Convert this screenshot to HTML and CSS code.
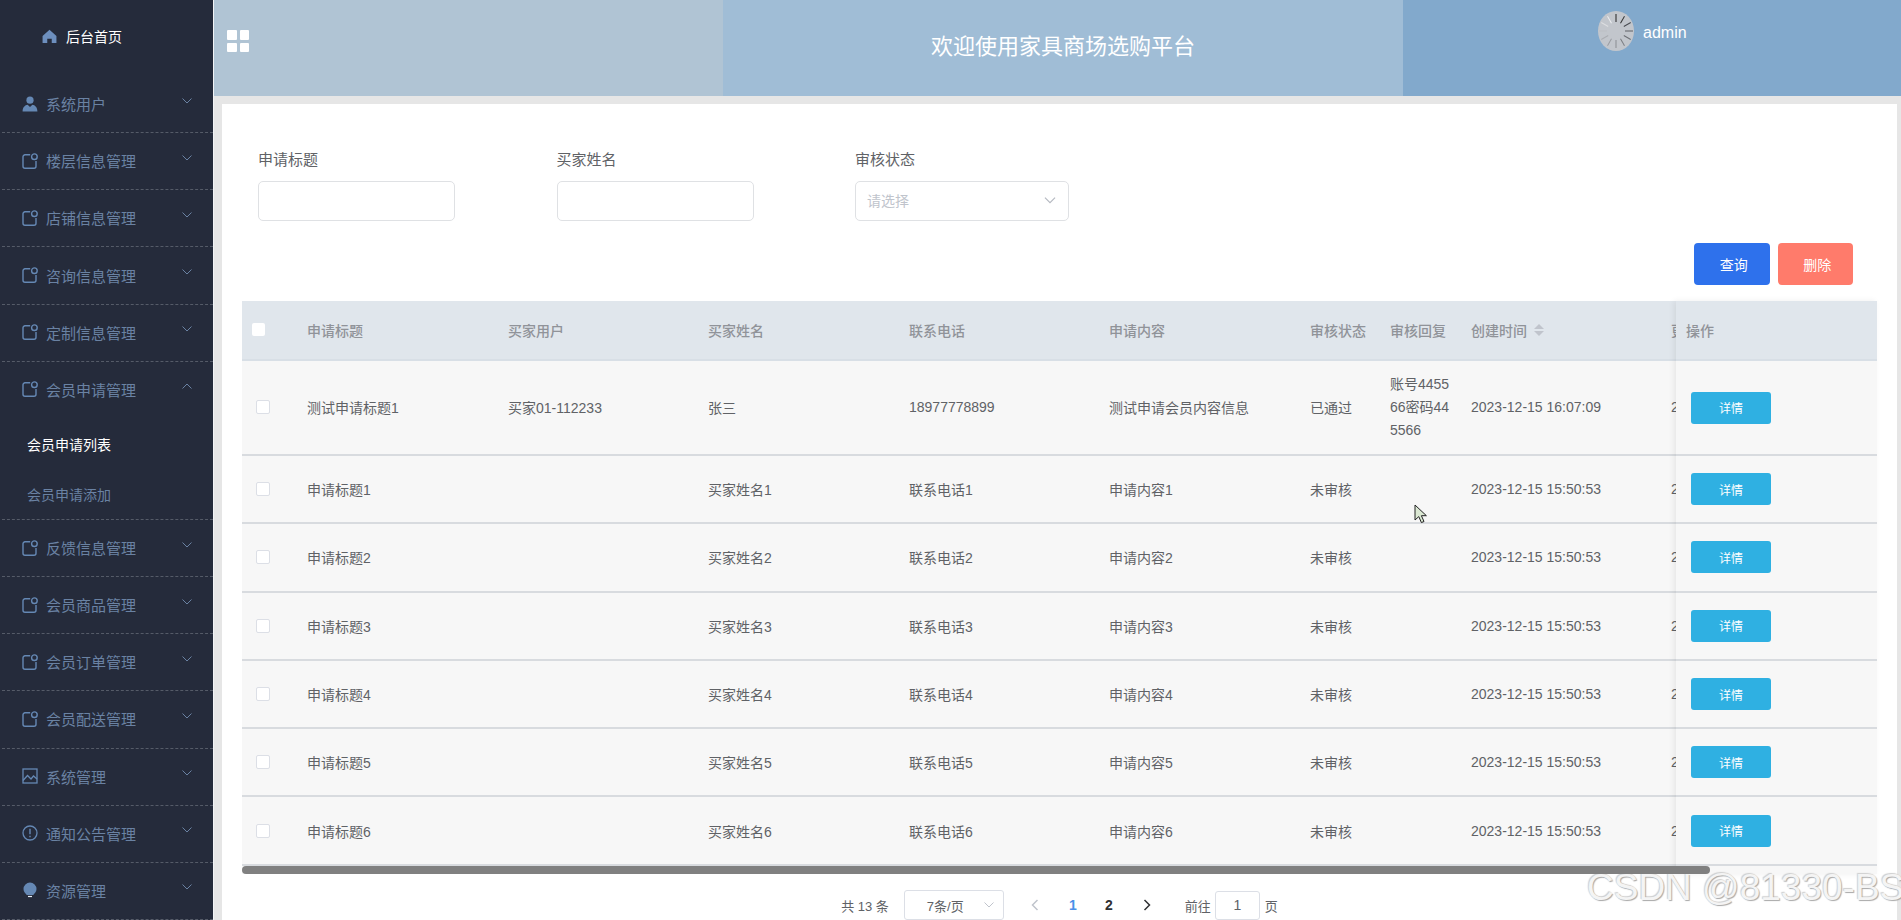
FILE: index.html
```html
<!DOCTYPE html>
<html lang="zh-CN">
<head>
<meta charset="utf-8">
<title>家具商场选购平台</title>
<link rel="stylesheet" href="styles.css">
</head>
<body>
<svg class="defs" width="0" height="0" aria-hidden="true">
  <defs>
    <symbol id="i-cube" viewBox="0 0 16 16"><path d="M8.200 1.800H3a2 2 0 0 0-2 2v9.400a2 2 0 0 0 2 2h9a2 2 0 0 0 2-2V8" fill="none" stroke="currentColor" stroke-width="1.400"/><circle cx="12.400" cy="3.700" r="2.800" fill="none" stroke="currentColor" stroke-width="1.400"/></symbol>
    <symbol id="i-down" viewBox="0 0 12 8"><path d="M1.500 1.500 6 6l4.500-4.500" fill="none" stroke="currentColor" stroke-width="1"/></symbol>
    <symbol id="i-up" viewBox="0 0 12 8"><path d="M1.500 6.500 6 2l4.500 4.500" fill="none" stroke="currentColor" stroke-width="1"/></symbol>
  </defs>
</svg>
<div class="app">
  <aside class="sidebar">
    <div class="home">
      <svg class="home-icon" viewBox="0 0 16 16"><path d="M8 .8 .6 7.400V15h5v-4.600h4.800V15h5V7.400z" fill="currentColor"/></svg>
      <span>后台首页</span>
    </div>
    <nav class="menu">
      <div class="item"><svg class="ico" viewBox="0 0 16 16"><circle cx="8" cy="4.200" r="3.600" fill="currentColor"/><path d="M0.600 15.600c0-4.400 2.400-6.600 5-6.900L8 11l2.400-2.300c2.600.3 5 2.500 5 6.900z" fill="currentColor"/></svg><span>系统用户</span><svg class="chev"><use href="#i-down"/></svg></div>
      <div class="item"><svg class="ico"><use href="#i-cube"/></svg><span>楼层信息管理</span><svg class="chev"><use href="#i-down"/></svg></div>
      <div class="item"><svg class="ico"><use href="#i-cube"/></svg><span>店铺信息管理</span><svg class="chev"><use href="#i-down"/></svg></div>
      <div class="item"><svg class="ico"><use href="#i-cube"/></svg><span>咨询信息管理</span><svg class="chev"><use href="#i-down"/></svg></div>
      <div class="item"><svg class="ico"><use href="#i-cube"/></svg><span>定制信息管理</span><svg class="chev"><use href="#i-down"/></svg></div>
      <div class="item open"><svg class="ico"><use href="#i-cube"/></svg><span>会员申请管理</span><svg class="chev"><use href="#i-up"/></svg></div>
      <div class="sub">
        <div class="sub-item active">会员申请列表</div>
        <div class="sub-item">会员申请添加</div>
      </div>
      <div class="item"><svg class="ico"><use href="#i-cube"/></svg><span>反馈信息管理</span><svg class="chev"><use href="#i-down"/></svg></div>
      <div class="item"><svg class="ico"><use href="#i-cube"/></svg><span>会员商品管理</span><svg class="chev"><use href="#i-down"/></svg></div>
      <div class="item"><svg class="ico"><use href="#i-cube"/></svg><span>会员订单管理</span><svg class="chev"><use href="#i-down"/></svg></div>
      <div class="item"><svg class="ico"><use href="#i-cube"/></svg><span>会员配送管理</span><svg class="chev"><use href="#i-down"/></svg></div>
      <div class="item"><svg class="ico" viewBox="0 0 16 16"><rect x="1" y="1" width="14" height="14" fill="none" stroke="currentColor" stroke-width="1.300"/><path d="M1 12.500 5.500 7.500l3.500 3.500 2.500-3 3.500 3" fill="none" stroke="currentColor" stroke-width="1.300"/></svg><span>系统管理</span><svg class="chev"><use href="#i-down"/></svg></div>
      <div class="item"><svg class="ico" viewBox="0 0 16 16"><circle cx="8" cy="8" r="7" fill="none" stroke="currentColor" stroke-width="1.300"/><path d="M8 3.800v5.400M8 10.800v1.500" fill="none" stroke="currentColor" stroke-width="1.400"/></svg><span>通知公告管理</span><svg class="chev"><use href="#i-down"/></svg></div>
      <div class="item"><svg class="ico" viewBox="0 0 16 16"><path d="M8 .5a6.500 6.500 0 0 1 6.500 6.500c0 2.800-2 4.400-3.300 6H4.800C3.500 11.400 1.500 9.800 1.500 7A6.500 6.500 0 0 1 8 .5z" fill="currentColor"/><path d="M6 14.500h4" stroke="#e6edf5" stroke-width="1.200"/></svg><span>资源管理</span><svg class="chev"><use href="#i-down"/></svg></div>
    </nav>
  </aside>

  <div class="main">
    <header class="topbar">
      <div class="top-left">
        <span class="tile-grid"><i></i><i></i><i></i><i></i></span>
      </div>
      <div class="top-center">欢迎使用家具商场选购平台</div>
      <div class="top-right">
        <svg class="avatar" viewBox="0 0 36 40">
          <ellipse cx="18" cy="20" rx="18" ry="20" fill="#c2c6cc"/>
          <g stroke-width="1">
            <line x1="18" y1="3" x2="18" y2="11" stroke="#222"/>
            <line x1="18" y1="3" x2="18" y2="11" stroke="#333" transform="rotate(30 18 20)"/>
            <line x1="18" y1="3" x2="18" y2="11" stroke="#484b50" transform="rotate(60 18 20)"/>
            <line x1="18" y1="3" x2="18" y2="11" stroke="#5e6166" transform="rotate(90 18 20)"/>
            <line x1="18" y1="3" x2="18" y2="11" stroke="#6c6f74" transform="rotate(120 18 20)"/>
            <line x1="18" y1="3" x2="18" y2="11" stroke="#7a7d82" transform="rotate(150 18 20)"/>
            <line x1="18" y1="3" x2="18" y2="11" stroke="#8a8d92" transform="rotate(180 18 20)"/>
            <line x1="18" y1="3" x2="18" y2="11" stroke="#9a9da2" transform="rotate(210 18 20)"/>
            <line x1="18" y1="3" x2="18" y2="11" stroke="#aaadb2" transform="rotate(240 18 20)"/>
            <line x1="18" y1="3" x2="18" y2="11" stroke="#bcbfc4" transform="rotate(270 18 20)"/>
            <line x1="18" y1="3" x2="18" y2="11" stroke="#dcdee1" transform="rotate(300 18 20)"/>
            <line x1="18" y1="3" x2="18" y2="11" stroke="#eceef0" transform="rotate(330 18 20)"/>
          </g>
        </svg>
        <span class="admin">admin</span>
      </div>
    </header>

    <section class="card">
      <form class="filters">
        <div class="field"><label class="field-label">申请标题</label><div class="input"></div></div>
        <div class="field"><label class="field-label">买家姓名</label><div class="input"></div></div>
        <div class="field field-select"><label class="field-label">审核状态</label>
          <div class="input select"><span class="placeholder">请选择</span><svg class="select-chev"><use href="#i-down"/></svg></div>
        </div>
      </form>
      <div class="actions">
        <button type="button" class="btn btn-query">查询</button>
        <button type="button" class="btn btn-delete">删除</button>
      </div>

      <div class="table">
        <div class="table-scroll">
          <div class="row head">
            <div class="cell cell-check"><span class="check head-check"></span></div>
            <div class="cell">申请标题</div><div class="cell">买家用户</div><div class="cell">买家姓名</div><div class="cell">联系电话</div><div class="cell">申请内容</div><div class="cell">审核状态</div><div class="cell">审核回复</div>
            <div class="cell">创建时间<span class="sort"><i class="sort-up"></i><i class="sort-down"></i></span></div>
            <div class="cell">更新时间</div>
          </div>
          <div class="row tall">
            <div class="cell cell-check"><span class="check"></span></div>
            <div class="cell">测试申请标题1</div><div class="cell">买家01-112233</div><div class="cell">张三</div><div class="cell">18977778899</div><div class="cell">测试申请会员内容信息</div><div class="cell">已通过</div><div class="cell reply">账号445566密码445566</div><div class="cell">2023-12-15 16:07:09</div><div class="cell">2023-12-15 16:07:09</div>
          </div>
          <div class="row"><div class="cell cell-check"><span class="check"></span></div><div class="cell">申请标题1</div><div class="cell"></div><div class="cell">买家姓名1</div><div class="cell">联系电话1</div><div class="cell">申请内容1</div><div class="cell">未审核</div><div class="cell"></div><div class="cell">2023-12-15 15:50:53</div><div class="cell">2023-12-15 15:50:53</div></div>
          <div class="row"><div class="cell cell-check"><span class="check"></span></div><div class="cell">申请标题2</div><div class="cell"></div><div class="cell">买家姓名2</div><div class="cell">联系电话2</div><div class="cell">申请内容2</div><div class="cell">未审核</div><div class="cell"></div><div class="cell">2023-12-15 15:50:53</div><div class="cell">2023-12-15 15:50:53</div></div>
          <div class="row"><div class="cell cell-check"><span class="check"></span></div><div class="cell">申请标题3</div><div class="cell"></div><div class="cell">买家姓名3</div><div class="cell">联系电话3</div><div class="cell">申请内容3</div><div class="cell">未审核</div><div class="cell"></div><div class="cell">2023-12-15 15:50:53</div><div class="cell">2023-12-15 15:50:53</div></div>
          <div class="row"><div class="cell cell-check"><span class="check"></span></div><div class="cell">申请标题4</div><div class="cell"></div><div class="cell">买家姓名4</div><div class="cell">联系电话4</div><div class="cell">申请内容4</div><div class="cell">未审核</div><div class="cell"></div><div class="cell">2023-12-15 15:50:53</div><div class="cell">2023-12-15 15:50:53</div></div>
          <div class="row"><div class="cell cell-check"><span class="check"></span></div><div class="cell">申请标题5</div><div class="cell"></div><div class="cell">买家姓名5</div><div class="cell">联系电话5</div><div class="cell">申请内容5</div><div class="cell">未审核</div><div class="cell"></div><div class="cell">2023-12-15 15:50:53</div><div class="cell">2023-12-15 15:50:53</div></div>
          <div class="row"><div class="cell cell-check"><span class="check"></span></div><div class="cell">申请标题6</div><div class="cell"></div><div class="cell">买家姓名6</div><div class="cell">联系电话6</div><div class="cell">申请内容6</div><div class="cell">未审核</div><div class="cell"></div><div class="cell">2023-12-15 15:50:53</div><div class="cell">2023-12-15 15:50:53</div></div>
          <div class="scroll-track"><div class="scroll-thumb"></div></div>
        </div>
        <div class="fixed-col">
          <div class="fixed-cell head-fixed">操作</div>
          <div class="fixed-cell tall-fixed"><button type="button" class="btn-detail">详情</button></div>
          <div class="fixed-cell"><button type="button" class="btn-detail">详情</button></div>
          <div class="fixed-cell"><button type="button" class="btn-detail">详情</button></div>
          <div class="fixed-cell"><button type="button" class="btn-detail">详情</button></div>
          <div class="fixed-cell"><button type="button" class="btn-detail">详情</button></div>
          <div class="fixed-cell"><button type="button" class="btn-detail">详情</button></div>
          <div class="fixed-cell"><button type="button" class="btn-detail">详情</button></div>
        </div>
      </div>

      <div class="pager">
        <span class="total">共 13 条</span>
        <div class="page-size"><span>7条/页</span><svg class="size-chev"><use href="#i-down"/></svg></div>
        <svg class="nav-arrow prev" viewBox="0 0 8 12"><path d="M6.500 1 1.500 6l5 5" fill="none" stroke="currentColor" stroke-width="1.500"/></svg>
        <span class="page current">1</span>
        <span class="page">2</span>
        <svg class="nav-arrow next" viewBox="0 0 8 12"><path d="M1.500 1l5 5-5 5" fill="none" stroke="currentColor" stroke-width="1.500"/></svg>
        <span class="goto">前往</span>
        <div class="page-input">1</div>
        <span class="page-unit">页</span>
      </div>
    </section>
  </div>
</div>

<svg class="cursor" viewBox="0 0 14 20"><path d="M1 1v15l3.800-3.400 2.600 6 2.600-1.100-2.600-5.800h5z" fill="#dbe8d3" stroke="#222" stroke-width="1"/></svg>
<div class="watermark">CSDN @81330-BS</div>
</body>
</html>
```
FILE: styles.css
```css
* { box-sizing: border-box; }
html, body { margin: 0; height: 100%; overflow: hidden; }
body {
  position: relative;
  font-family: "Liberation Sans", "Noto Sans CJK SC", sans-serif;
  font-size: 14px;
  color: #606266;
  background: #e6e6e6;
}
.defs { position: absolute; }
.app { display: flex; height: 920px; }

/* Sidebar */
.sidebar {
  flex: 0 0 214px;
  background: #252b3b;
  border-right: 1px solid #f2f4f6;
  overflow: hidden;
}
.home {
  height: 76px;
  padding: 0 0 4px 42px;
  display: flex;
  align-items: center;
  gap: 9px;
  color: #fff;
  font-size: 14px;
}
.home-icon { width: 15px; height: 15px; color: #6d8fbe; }
.menu { display: flex; flex-direction: column; }
.item {
  height: 57.170px;
  margin-left: 2px;
  padding: 0 0 1px 20px;
  display: flex;
  align-items: center;
  border-bottom: 1px dashed #555b68;
  color: #6a82a3;
  font-size: 15px;
}
.item.open { border-bottom-color: transparent; }
.ico { width: 16px; height: 16px; flex: none; color: #6588b4; margin-right: 8px; }
.chev { width: 12px; height: 8px; color: #6a82a3; margin-left: auto; margin-right: 20px; position: relative; top: -3px; }
.sub { display: flex; flex-direction: column; margin-left: 2px; border-bottom: 1px dashed #555b68; }
.sub-item { height: 50px; padding-left: 25px; display: flex; align-items: center; color: #6a82a3; font-size: 14px; }
.sub-item.active { color: #fff; }

/* Main column */
.main { flex: 1; min-width: 0; display: flex; flex-direction: column; }
.topbar { height: 96px; flex: none; display: flex; color: #fff; }
.top-left { flex: 0 0 509px; background: #b0c4d4; padding: 30px 0 0 13px; }
.tile-grid { display: grid; grid-template-columns: 9.500px 9.500px; grid-auto-rows: 9.500px; gap: 3px; width: 22px; }
.tile-grid i { background: #fff; border-radius: 1px; }
.top-center { flex: 0 0 680px; background: #a0bdd6; display: flex; align-items: center; justify-content: center; font-size: 22px; padding-bottom: 9px; }
.top-right { flex: 1; background: #82a9cc; display: flex; align-items: flex-start; padding: 11px 0 0 195px; }
.avatar { width: 36px; height: 40px; }
.admin { font-size: 16px; margin: 12px 0 0 9px; line-height: 20px; }

/* Card */
.card { flex: 1; min-height: 0; margin: 8px 4px 0 8px; background: #fff; padding: 0 20px; overflow: hidden; }
.filters { display: flex; padding: 46px 0 0 16px; }
.field { width: 197px; margin-right: 101.500px; }
.field-select { width: 214px; margin-right: 0; }
.field-label { display: block; font-size: 15px; line-height: 20px; margin-bottom: 11px; color: #606266; }
.input { height: 40px; border: 1px solid #dfe1e4; border-radius: 5px; background: #fff; }
.select { display: flex; align-items: center; padding: 0 11px 2px; }
.placeholder { color: #c0c4cc; font-size: 14px; }
.select-chev { width: 14px; height: 9px; color: #b4b8c0; margin-left: auto; }
.actions { display: flex; justify-content: flex-end; gap: 8px; margin-top: 22px; margin-bottom: 16px; padding-right: 24px; }
.btn { width: 75.500px; height: 42px; border: 0; border-radius: 4px; color: #fff; font: inherit; font-size: 14px; padding: 0 0 0 4px; }
.btn-query { background: #2e71ec; }
.btn-delete { background: #ff7b6b; }

/* Table */
.table { position: relative; width: 1635px; }
.table-scroll { overflow: hidden; }
.row {
  display: grid;
  grid-template-columns: 55px 201px 200px 201px 200px 201px 80px 81px 200px 200px;
  width: 1635px;
  height: 68.300px;
  background: #f7f7f7;
  border-bottom: 2px solid #d8dbdf;
  overflow: hidden;
}
.row.head { height: 60px; background: #e0e6ec; color: #909399; font-weight: 500; border-bottom-color: #d8dfe6; padding-bottom: 1px; }
.row.tall { height: 95px; padding-bottom: 1px; }
.cell { padding: 0 10px; display: flex; align-items: center; white-space: nowrap; min-width: 0; }
.cell-check { padding: 0; }
.reply { white-space: normal; word-break: break-all; line-height: 23px; }
.check { width: 14px; height: 14px; background: #fff; border: 1px solid #dcdfe6; border-radius: 2px; margin-left: 14px; }
.head-check { margin-left: 10px; border: 0; width: 13px; height: 13px; }
.sort { display: inline-flex; flex-direction: column; gap: 2px; margin-left: 7px; }
.sort i { display: block; width: 0; height: 0; border-left: 5px solid transparent; border-right: 5px solid transparent; }
.sort-up { border-bottom: 5px solid #c0c4cc; }
.sort-down { border-top: 5px solid #c0c4cc; }
.scroll-track { height: 8px; background: #f7f7f7; }
.scroll-thumb { position: relative; z-index: 1; width: 1468px; height: 8px; background: #808080; border-radius: 4px; }

.fixed-col {
  position: absolute;
  top: 0;
  right: 0;
  bottom: 0;
  width: 201px;
  display: flex;
  flex-direction: column;
  background: #f7f7f7;
  box-shadow: -2px 0 6px rgba(0, 0, 0, .07);
}
.fixed-cell {
  height: 68.300px;
  padding-left: 15px;
  display: flex;
  align-items: center;
  background: #f7f7f7;
  border-bottom: 2px solid #d8dbdf;
  flex: none;
}
.head-fixed { height: 60px; padding-left: 10px; background: #e0e6ec; color: #909399; font-weight: 500; border-bottom-color: #d8dfe6; }
.tall-fixed { height: 95px; }
.btn-detail { width: 80px; height: 32px; border: 0; border-radius: 3px; background: #2fb0e2; color: #fff; font: inherit; font-size: 12px; }

/* Pagination */
.pager { display: flex; align-items: center; justify-content: center; height: 29px; margin-top: 17px; font-size: 13px; color: #606266; }
.page-size {
  width: 100px;
  height: 30px;
  margin: 0 18px 0 15px;
  border: 1px solid #dcdfe6;
  border-radius: 3px;
  display: flex;
  align-items: center;
  padding-left: 22px;
}
.size-chev { width: 12px; height: 8px; color: #c0c4cc; margin-left: auto; margin-right: 8px; }
.nav-arrow { width: 8px; height: 12px; }
.prev { color: #c0c4cc; margin: 0 16px 0 9px; }
.next { color: #303133; margin: 0 34px 0 16px; }
.page { width: 36px; text-align: center; font-weight: 700; color: #303133; font-size: 14px; }
.page.current { color: #4a90e8; }
.goto { margin-right: 4px; }
.page-input { width: 45px; height: 29px; border: 1px solid #dcdfe6; border-radius: 3px; display: flex; align-items: center; justify-content: center; margin-right: 5px; font-size: 14px; }

/* Overlays */
.cursor { position: absolute; left: 1414px; top: 504px; width: 14px; height: 20px; }
.watermark {
  position: absolute;
  left: 1587px;
  top: 866px;
  font-size: 37px;
  line-height: 43px;
  white-space: nowrap;
  color: #f4f4f4;
  text-shadow: 1px 1px 1px #a8a8a8, -1px -1px 1px #cfcfcf;
}
```
